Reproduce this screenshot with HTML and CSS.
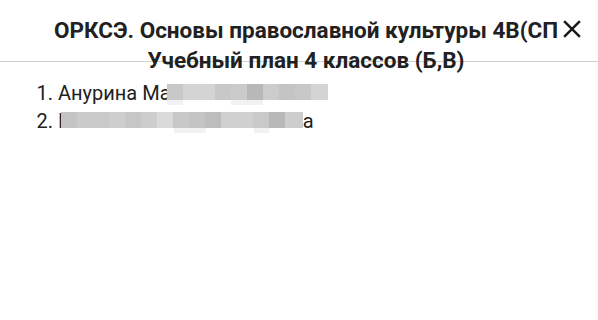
FILE: index.html
```html
<!doctype html>
<html lang="ru">
    <head>
        <meta charset="UTF-8" />
        <meta name="viewport" content="width=device-width, initial-scale=1.0" />
        <title>Учебный план</title>
        <link rel="stylesheet" href="styles.css">
    </head>
    <body>
        <div class="dialog">
            <div class="dialog-header">
                <div class="dialog-title">
                    <div class="title-main">ОРКСЭ. Основы православной культуры 4В(СП</div>
                    <div class="title-sub">Учебный план 4 классов (Б,В)</div>
                </div>
                <button class="close-button" aria-label="Закрыть">
                    <svg viewBox="0 0 24 24" width="30" height="30">
                        <path d="M19 6.41 17.59 5 12 10.59 6.41 5 5 6.41 10.59 12 5 17.59 6.41 19 12 13.41 17.59 19 19 17.59 13.41 12z" />
                    </svg>
                </button>
            </div>
            <ol class="students">
                <li>Анурина Ма<span class="hidden-name hidden-first"></span></li>
                <li>К<span class="hidden-name hidden-second"></span>а</li>
            </ol>
        </div>
    </body>
</html>
```

FILE: styles.css
```css
body {
    margin: 0;
    background-color: white;
    font-family: Roboto, "Noto Sans", sans-serif;
    color: #212121;
}

.dialog {
    width: 598px;
}

.dialog-header {
    display: flex;
    height: 62px;
    box-sizing: border-box;
    border-bottom: 1px solid #d0d0d0;
}

.dialog-title {
    width: 504px;
    margin-left: 54px;
    padding-top: 15px;
    font-size: 22.5px;
    font-weight: bold;
    line-height: 30px;
    text-align: center;
}

.title-main {
    white-space: nowrap;
    overflow: hidden;
    text-align: left;
}

.close-button {
    display: flex;
    align-items: center;
    justify-content: center;
    width: 40px;
    height: 58px;
    margin-left: -6px;
    padding: 0;
    border: none;
    background-color: transparent;
    cursor: pointer;
}

.close-button svg {
    fill: #1a1a1a;
}

.students {
    margin: 17px 0 0;
    padding-left: 58px;
    font-size: 20px;
    line-height: 28px;
}

.hidden-name {
    display: inline-block;
    height: 21px;
    vertical-align: -5px;
    background-repeat: no-repeat;
    background-size: 100% 16px, 100% 5px;
    background-position: top, bottom;
}

.hidden-first {
    width: 161px;
    margin-left: -4px;
    background-image:
        linear-gradient(to right,
            #c8c8c8 0 16px, #d4d4d4 16px 48px, #c8c8c8 48px 64px,
            #cbcbcb 64px 80px, #b8b8b8 80px 96px, #cccccc 96px 112px,
            #c4c4c4 112px 128px, #c8c8c8 128px 144px, #d4d4d4 144px),
        linear-gradient(to right,
            #f2f2f2 0 16px, transparent 16px 64px, #f2f2f2 64px 96px,
            transparent 96px);
}

.hidden-second {
    width: 242px;
    margin-left: -10px;
    background-image:
        linear-gradient(to right,
            #c4c4c4 0 16px, #cacaca 16px 48px, #cecece 48px 64px,
            #c6c6c6 64px 80px, #cdcdcd 80px 96px, #dadada 96px 112px,
            #c8c8c8 112px 128px, #c4c4c4 128px 144px, #bdbdbd 144px 160px,
            #d0d0d0 160px 192px, #c9c9c9 192px 208px, #b8b8b8 208px 224px,
            #cdcdcd 224px),
        linear-gradient(to right,
            transparent 0 113px, #f2f2f2 113px 145px, transparent 145px 193px,
            #f2f2f2 193px 208px, transparent 208px);
}
```
